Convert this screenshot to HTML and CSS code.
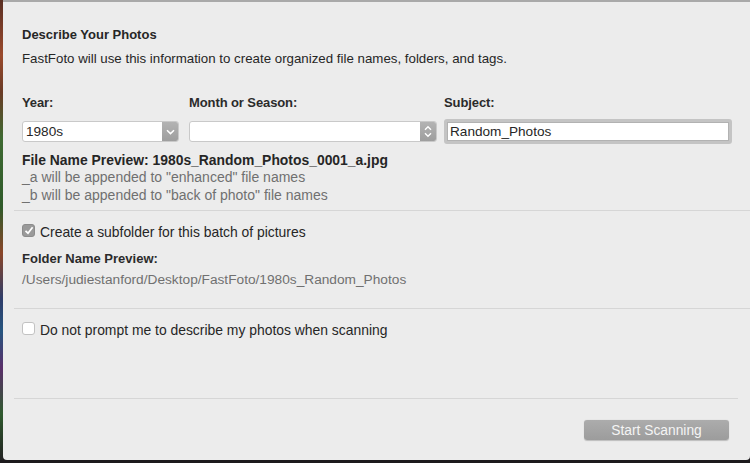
FILE: index.html
```html
<!DOCTYPE html>
<html lang="en">
<head>
    <meta charset="UTF-8">
    <title>Describe Your Photos</title>
    <link rel="stylesheet" href="styles.css">
</head>
<body>
    <div class="screen">
        <div class="desktop-edge"></div>
        <div class="dialog">
            <div class="content">
                <h1 class="title">Describe Your Photos</h1>
                <p class="intro">FastFoto will use this information to create organized file names, folders, and tags.</p>

                <div class="fields">
                    <div class="field field-year">
                        <label>Year:</label>
                        <div class="select">
                            <span class="select-value">1980s</span>
                            <span class="select-btn">
                                <svg width="9" height="6" viewBox="0 0 9 6"><path d="M1 1.2 L4.5 4.6 L8 1.2" fill="none" stroke="#fff" stroke-width="1.5"/></svg>
                            </span>
                        </div>
                    </div>
                    <div class="field field-month">
                        <label>Month or Season:</label>
                        <div class="select">
                            <span class="select-value"></span>
                            <span class="select-btn">
                                <svg width="8" height="13" viewBox="0 0 8 13"><path d="M1 4.8 L4 1.8 L7 4.8 M1 8.2 L4 11.2 L7 8.2" fill="none" stroke="#fff" stroke-width="1.4"/></svg>
                            </span>
                        </div>
                    </div>
                    <div class="field field-subject">
                        <label>Subject:</label>
                        <div class="text-input">Random_Photos</div>
                    </div>
                </div>

                <p class="preview">File Name Preview: 1980s_Random_Photos_0001_a.jpg</p>
                <p class="note">_a will be appended to "enhanced" file names</p>
                <p class="note">_b will be appended to "back of photo" file names</p>
            </div>

            <div class="separator"></div>

            <div class="content">
                <div class="check-row">
                    <span class="checkbox checked">
                        <svg width="10" height="9" viewBox="0 0 10 9"><path d="M1.5 4.8 L4 7.2 L8.6 1.2" fill="none" stroke="#fff" stroke-width="1.7"/></svg>
                    </span>
                    <span class="check-label">Create a subfolder for this batch of pictures</span>
                </div>
                <p class="folder-label">Folder Name Preview:</p>
                <p class="path">/Users/judiestanford/Desktop/FastFoto/1980s_Random_Photos</p>
            </div>

            <div class="separator sep-second"></div>

            <div class="content">
                <div class="check-row">
                    <span class="checkbox"></span>
                    <span class="check-label">Do not prompt me to describe my photos when scanning</span>
                </div>
            </div>

            <div class="separator sep-footer"></div>

            <div class="footer">
                <button class="btn">Start Scanning</button>
            </div>
        </div>
    </div>
</body>
</html>
```

FILE: styles.css
```css
* {
    margin: 0;
    padding: 0;
    box-sizing: border-box;
}

body {
    width: 750px;
    height: 463px;
    overflow: hidden;
    background: #1c1a1c;
    font-family: "Liberation Sans", Arial, sans-serif;
    font-size: 13px;
    color: #262626;
}

.screen {
    display: flex;
    height: 460px;
}

.desktop-edge {
    width: 3px;
    background: linear-gradient(to bottom, #5a2f24 0%, #9a4a2c 12%, #6a3b26 20%, #3f6a32 30%, #2f5a2a 45%, #8a4528 55%, #2e3d6a 65%, #26557f 72%, #5a2f6a 80%, #2f5a2e 90%, #222 100%);
}

.dialog {
    flex: 1;
    display: flex;
    flex-direction: column;
    background: #ececec;
    border-top: 2px solid #a9a9a9;
    border-bottom-left-radius: 4px;
    border-bottom-right-radius: 4px;
}

.content {
    padding: 0 0 0 19px;
}

.title {
    font-size: 13px;
    font-weight: bold;
    line-height: 16px;
    margin-top: 25px;
}

.intro {
    font-size: 13.3px;
    line-height: 16px;
    margin-top: 8px;
}

.fields {
    display: flex;
    margin-top: 28px;
}

.field label {
    display: block;
    font-weight: bold;
    color: #2b2b2b;
    line-height: 16px;
    margin-bottom: 10px;
    letter-spacing: -0.1px;
}

.field-year {
    width: 167px;
}

.field-month {
    width: 255px;
}

.field-subject {
    width: 288px;
}

.select {
    display: flex;
    height: 21px;
    background: #fff;
    border: 1px solid #c9c9c9;
    border-radius: 3px;
    overflow: hidden;
}

.field-year .select {
    width: 157px;
}

.field-month .select {
    width: 248px;
}

.select-value {
    flex: 1;
    line-height: 19px;
    padding-left: 3px;
    font-size: 13.6px;
}

.select-btn {
    width: 16px;
    display: flex;
    align-items: center;
    justify-content: center;
    background: linear-gradient(to bottom, #b3b3b3, #9e9e9e);
}

.text-input {
    width: 288px;
    height: 25px;
    margin-top: -2px;
    border: 3px solid #c4c4c4;
    border-radius: 3px;
    background: #fff;
    line-height: 19px;
    padding-left: 3px;
    font-size: 13.6px;
    box-shadow: inset 0 0 0 1px #b2b2b2;
}

.preview {
    font-size: 13.9px;
    font-weight: bold;
    color: #262626;
    line-height: 16px;
    margin-top: 8px;
}

.note {
    font-size: 14px;
    color: #707070;
    line-height: 18px;
}

.note:first-of-type {
    margin-top: 3px;
}

.separator {
    height: 1px;
    background: #d6d6d6;
    margin-left: 11px;
    margin-top: 6px;
}

.check-row {
    display: flex;
    align-items: center;
    gap: 5px;
    margin-top: 9px;
}

.checkbox {
    width: 13px;
    height: 13px;
    border-radius: 3px;
    background: #fff;
    border: 1px solid #c2c2c2;
    display: flex;
    align-items: center;
    justify-content: center;
}

.checkbox.checked {
    background: #9a9a9a;
    border-color: #8c8c8c;
}

.check-label {
    font-size: 13.9px;
    line-height: 16px;
    margin-top: 4px;
}

.folder-label {
    font-weight: bold;
    color: #2b2b2b;
    line-height: 16px;
    margin-top: 11px;
}

.path {
    font-size: 13.7px;
    color: #707070;
    line-height: 16px;
    margin-top: 5px;
}

.sep-second {
    margin-top: 20px;
}

.sep-footer {
    margin-top: 60px;
    margin-right: 12px;
}

.footer {
    display: flex;
    justify-content: flex-end;
    padding: 21px 21px 0 0;
}

.btn {
    width: 145px;
    height: 20px;
    border: none;
    border-radius: 3px;
    background: linear-gradient(to bottom, #acacac, #9c9c9c);
    color: #f4f4f4;
    font-family: "Liberation Sans", Arial, sans-serif;
    font-size: 13.8px;
    box-shadow: 0 0.5px 1px rgba(0, 0, 0, 0.2);
}
```
